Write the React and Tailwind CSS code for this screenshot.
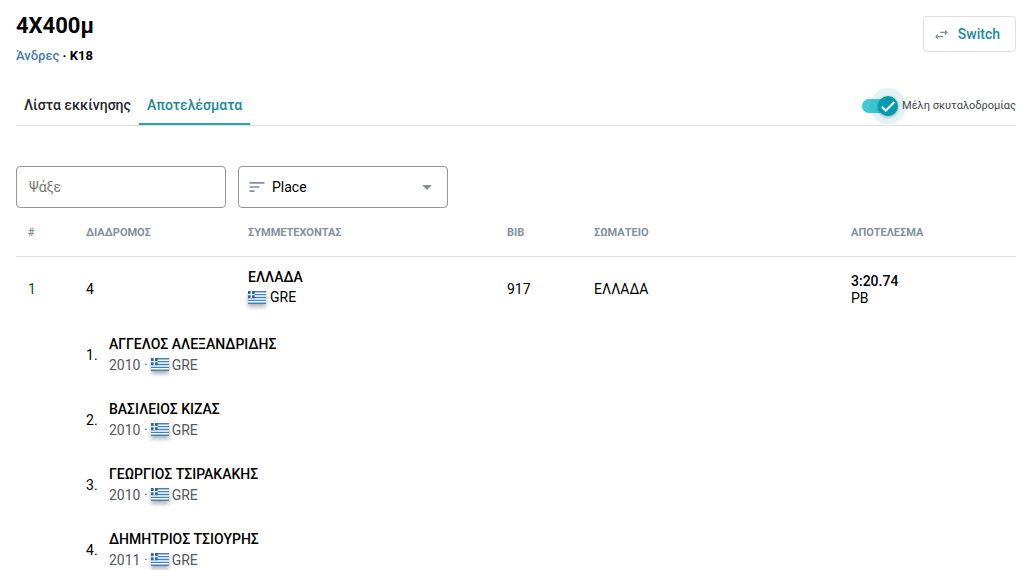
import React, { useState } from "react";

const members = [
  { leg: 1, name: "ΑΓΓΕΛΟΣ ΑΛΕΞΑΝΔΡΙΔΗΣ", year: 2010 },
  { leg: 2, name: "ΒΑΣΙΛΕΙΟΣ ΚΙΖΑΣ", year: 2010 },
  { leg: 3, name: "ΓΕΩΡΓΙΟΣ ΤΣΙΡΑΚΑΚΗΣ", year: 2010 },
  { leg: 4, name: "ΔΗΜΗΤΡΙΟΣ ΤΣΙΟΥΡΗΣ", year: 2011 },
];

function Flag() {
  return (
    <svg
      className="h-[13px] w-[18px] shrink-0 shadow-[0_3px_4px_rgba(0,0,0,0.3)]"
      viewBox="0 0 27 18"
      preserveAspectRatio="none"
      aria-hidden="true"
    >
      <rect width="27" height="18" fill="#fff" />
      <path d="M0 0h27v2H0zM0 4h27v2H0zM0 8h27v2H0zM0 12h27v2H0zM0 16h27v2H0z" fill="#3f80c2" />
      <path d="M0 0h10v10H0z" fill="#2467b0" />
      <path d="M4 0h2v4h4v2H6v4H4V6H0V4h4z" fill="#fff" />
    </svg>
  );
}

function Header() {
  return (
    <header className="flex items-start justify-between">
      <div>
        <h1 className="text-[22px] leading-5 font-bold">4X400μ</h1>
        <p className="mt-3 text-[13px] leading-4 font-bold">
          <a href="#men" className="font-medium text-[#4678b2]">Άνδρες</a> · K18
        </p>
      </div>
      <button className="flex h-9 items-center gap-2 rounded border border-[#dcdfe2] pr-[15px] pl-[9px] text-sm font-medium text-[#1b8b9b]">
        <svg className="size-[17px]" viewBox="0 0 24 24" fill="#84909c" aria-hidden="true">
          <path d="M6.99 11 3 15l3.99 4v-3H14v-2H6.99v-3zM21 9l-3.99-4v3H10v2h7.01v3L21 9z" />
        </svg>
        Switch
      </button>
    </header>
  );
}

function MembersToggle({ checked, onChange }) {
  return (
    <label className="flex cursor-pointer items-center gap-1 pt-0.5 text-[11px] leading-4 text-[#3f454b]">
      <span className="relative flex h-5 w-9 items-center">
        <input type="checkbox" checked={checked} onChange={onChange} className="peer sr-only" />
        <span className="h-[14px] w-[34px] rounded-full bg-[#bcc3c8] peer-checked:bg-[#45c8d6]" />
        <span className="absolute left-0 flex size-5 items-center justify-center rounded-full bg-[#7f8a92] shadow-[0_1px_3px_rgba(0,0,0,0.4)] ring-8 ring-[#069aae]/12 peer-checked:left-4 peer-checked:bg-[#069aae]">
          <svg className="size-[18px]" viewBox="0 0 24 24" fill="#fff" aria-hidden="true">
            <path d="M9 16.2 4.8 12l-1.9 1.9L9 20 21.5 7.5l-1.9-1.9z" />
          </svg>
        </span>
      </span>
      Μέλη σκυταλοδρομίας
    </label>
  );
}

function Filters() {
  return (
    <div className="mt-10 flex gap-3">
      <input
        type="text"
        aria-label="Ψάξε"
        placeholder="Ψάξε"
        className="h-[42px] w-[210px] rounded border border-[#969696] px-3 text-sm placeholder:text-[#757575]"
      />
      <div className="relative h-[42px] w-[210px]">
        <select
          aria-label="Sort"
          className="h-full w-full appearance-none rounded border border-[#969696] bg-white pr-8 pl-[33px] text-sm"
        >
          <option>Place</option>
          <option>BIB</option>
        </select>
        <svg className="pointer-events-none absolute top-[11px] left-[9px] size-5" viewBox="0 0 24 24" fill="#84909c" aria-hidden="true">
          <path d="M3 18h6v-2H3v2zM3 6v2h18V6H3zm0 7h12v-2H3v2z" />
        </svg>
        <svg className="pointer-events-none absolute top-[9px] right-[9px] size-6" viewBox="0 0 24 24" fill="#84909c" aria-hidden="true">
          <path d="m7 10 5 5 5-5z" />
        </svg>
      </div>
    </div>
  );
}

function Results({ showMembers }) {
  return (
    <table className="w-full table-fixed text-left text-sm">
      <colgroup>
        <col className="w-[5.8%]" />
        <col className="w-[16.2%]" />
        <col className="w-[25.9%]" />
        <col className="w-[8.7%]" />
        <col className="w-[25.7%]" />
        <col className="w-[17.7%]" />
      </colgroup>
      <thead>
        <tr className="h-12 border-b border-[#dcdfe2] text-[11px] text-[#84909c]">
          <th className="px-3 pt-0.5">#</th>
          <th className="px-3 pt-0.5">ΔΙΑΔΡΟΜΟΣ</th>
          <th className="px-3 pt-0.5">ΣΥΜΜΕΤΕΧΟΝΤΑΣ</th>
          <th className="px-3 pt-0.5">BIB</th>
          <th className="px-3 pt-0.5">ΣΩΜΑΤΕΙΟ</th>
          <th className="px-3 pt-0.5">ΑΠΟΤΕΛΕΣΜΑ</th>
        </tr>
      </thead>
      <tbody>
        <tr className="h-[66px]">
          <td className="px-3 text-[#1d4a1d]">1</td>
          <td className="px-3">4</td>
          <td className="px-3 pb-1">
            <div className="leading-5 font-medium">ΕΛΛΑΔΑ</div>
            <div className="flex items-center gap-1 leading-5">
              <Flag />
              GRE
            </div>
          </td>
          <td className="px-3">917</td>
          <td className="px-3">ΕΛΛΑΔΑ</td>
          <td className="px-3 pt-0.5 leading-[17px]">
            <div className="font-medium">3:20.74</div>
            <div>PB</div>
          </td>
        </tr>
        {showMembers &&
          members.map((m) => (
            <tr key={m.leg} className="h-[65px]">
              <td />
              <td colSpan={5} className="px-3">
                <div className="flex items-center">
                  <span className="w-[23px]">{m.leg}.</span>
                  <div className="pb-0.5">
                    <div className="leading-[22px] font-medium">{m.name}</div>
                    <div className="flex items-center gap-[3px] leading-5 text-[#55595d]">
                      <span>{m.year} ·</span>
                      <Flag />
                      <span>GRE</span>
                    </div>
                  </div>
                </div>
              </td>
            </tr>
          ))}
      </tbody>
    </table>
  );
}

export default function App() {
  const [showMembers, setShowMembers] = useState(true);
  return (
    <main className="bg-white pt-4 pr-3 pl-4 font-['Roboto',sans-serif] text-black">
      <Header />
      <div className="mt-5 flex items-stretch justify-between border-b border-[#dcdfe2]">
        <nav className="flex text-sm font-medium">
          <a href="#start-list" className="flex h-[41px] items-center border-b-2 border-transparent px-2 pt-0.5 text-[#26292c]">
            Λίστα εκκίνησης
          </a>
          <a href="#results" className="flex h-[41px] items-center border-b-2 border-[#2ba5b5] px-2 pt-0.5 text-[#1b8b9b]">
            Αποτελέσματα
          </a>
        </nav>
        <MembersToggle checked={showMembers} onChange={() => setShowMembers(!showMembers)} />
      </div>
      <Filters />
      <Results showMembers={showMembers} />
    </main>
  );
}
